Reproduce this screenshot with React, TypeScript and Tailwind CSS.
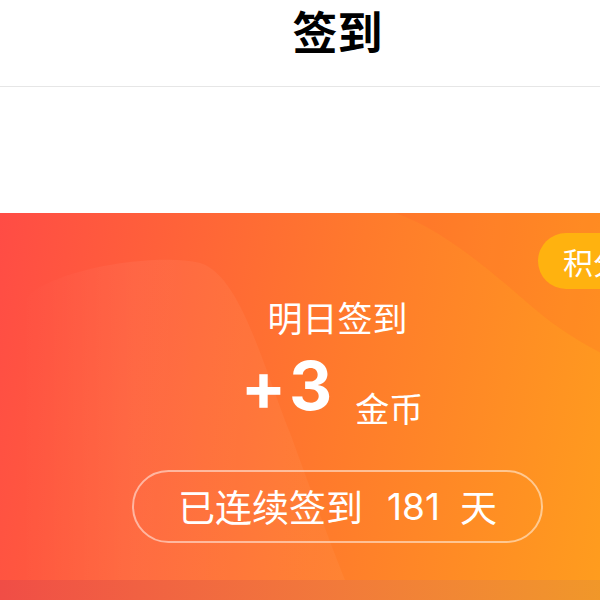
import React from "react";

const CJK = { fontFamily: '"Noto Sans CJK SC", "Noto Sans", sans-serif' };
const NUM = { fontFamily: 'Inter, "Liberation Sans", sans-serif' };

function BannerWaves() {
  return (
    <svg
      viewBox="0 0 675 367"
      preserveAspectRatio="none"
      className="absolute inset-0 w-full h-full pointer-events-none"
    >
      <defs>
        <linearGradient id="blob-fade" x1="0" y1="0" x2="1" y2="0">
          <stop offset="0" stopColor="#ffffff" stopOpacity="0" />
          <stop offset="0.35" stopColor="#ffffff" stopOpacity="0.05" />
          <stop offset="1" stopColor="#ffffff" stopOpacity="0.04" />
        </linearGradient>
      </defs>
      {/* darker red-orange lobe along the top right */}
      <path
        d="M395 0 C 430 12, 465 35, 530 92 C 560 118, 600 145, 675 172 L 675 0 Z"
        fill="#ff3b2f"
        fillOpacity="0.1"
      />
      {/* lighter wave on the left */}
      <path
        d="M20 367 L 20 95 C 30 60, 150 38, 200 50 C 240 62, 262 150, 290 220 C 312 280, 330 330, 345 367 Z"
        fill="url(#blob-fade)"
      />
    </svg>
  );
}

export default function App() {
  return (
    <div className="w-[600px] h-[600px] overflow-hidden bg-white" style={CJK}>
      <div className="w-[675px]">
        {/* Header */}
        <div className="h-[86px] box-content border-b border-[#e6e6e6] flex justify-center">
          <h1 className="text-[45px] leading-[52px] font-bold text-black mt-[5px]">签到</h1>
        </div>

        {/* spacer area */}
        <div className="h-[126px] bg-white" />

        {/* Banner */}
        <div className="relative h-[367px] overflow-hidden bg-linear-[100deg] from-[#ff4c45] via-[#ff7a2c] to-[#ffa51a]">
          <BannerWaves />

          <div className="absolute top-[20px] left-[538px] h-[56px] pl-[25px] pr-5 rounded-l-full bg-[#ffb20f] flex items-center">
            <span className="text-white text-[30px] leading-none whitespace-nowrap">积分规则</span>
          </div>

          <div className="relative flex flex-col items-center pt-[86px] text-white">
            <div className="text-[35px] leading-none">明日签到</div>

            <div className="flex items-end mt-[18px] pr-[11px]">
              <span className="text-[67px] font-bold leading-none tracking-[3px]" style={NUM}>
                +3
              </span>
              <span className="relative top-[6px] text-[34px] leading-none ml-[20px]">金币</span>
            </div>

            <div className="mt-[51px] w-[411px] h-[73px] rounded-full border-2 border-white/50 flex items-center justify-center text-[37px] leading-none">
              <span>已连续签到</span>
              <span className="ml-[24px]" style={NUM}>
                181
              </span>
              <span className="ml-[20px]">天</span>
            </div>
          </div>
        </div>

        {/* next section edge */}
        <div className="h-[20px] bg-linear-to-r from-[#f04d46] to-[#f09f22]" />
      </div>
    </div>
  );
}
